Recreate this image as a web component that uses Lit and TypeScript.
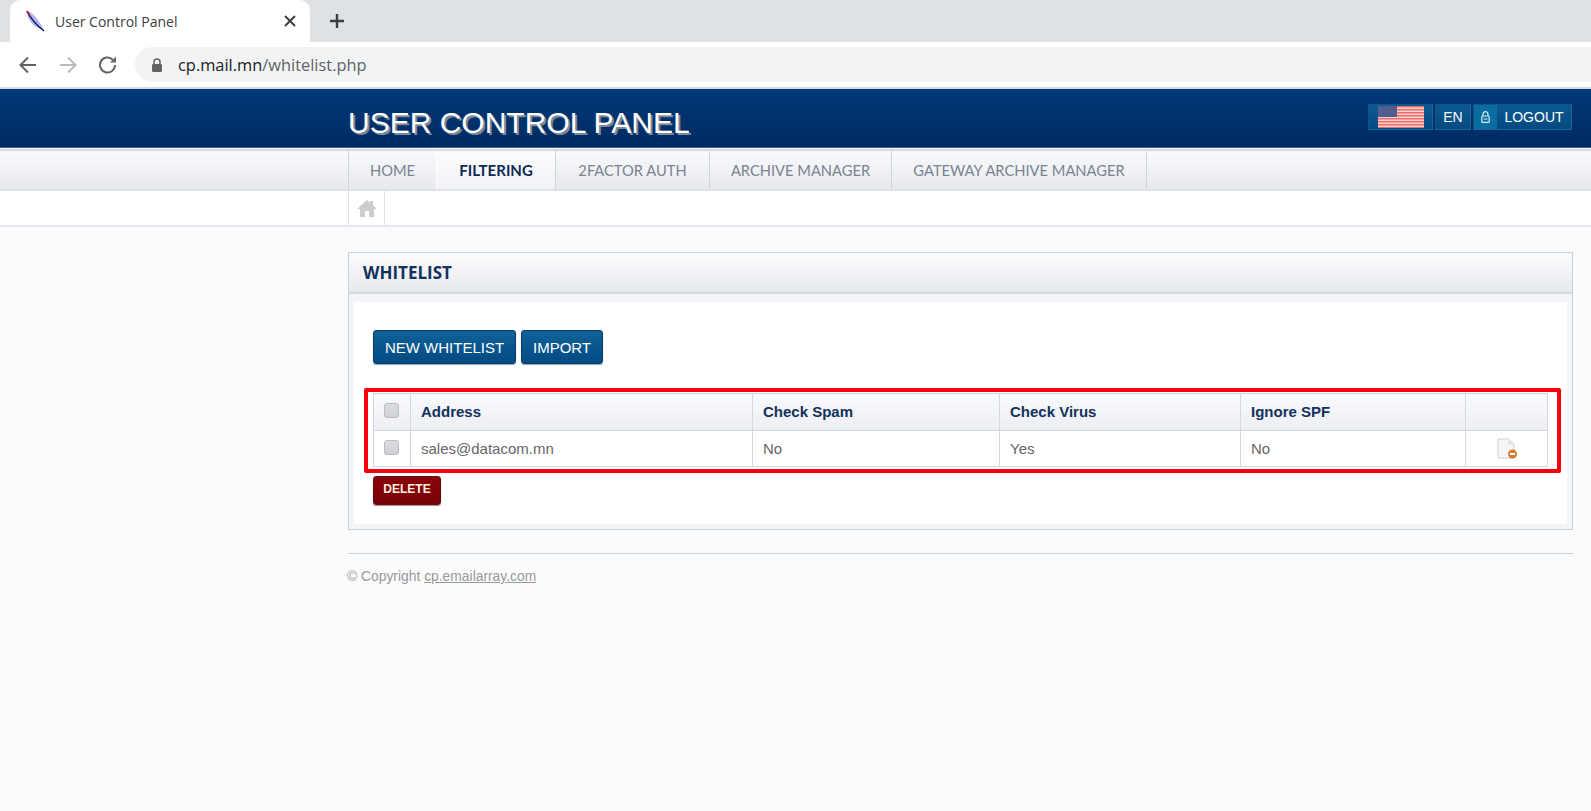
import { LitElement, html, css, svg } from "lit";
import { customElement } from "lit/decorators.js";

const tabs = [
  { label: "HOME", w: 88 },
  { label: "FILTERING", w: 119, active: true },
  { label: "2FACTOR AUTH", w: 154 },
  { label: "ARCHIVE MANAGER", w: 182 },
  { label: "GATEWAY ARCHIVE MANAGER", w: 256 },
];
const stripes = [0, 1, 2, 3, 4, 5, 6];

@customElement("app-root")
export class AppRoot extends LitElement {
  static styles = css`
    :host { display: block; min-height: 811px; background: #fafbfd; font-family: "Liberation Sans", Arial, sans-serif; color: #555; overflow: hidden; }
    .strip { height: 42px; background: #dee1e6; display: flex; align-items: flex-end; position: relative; }
    .tab { margin-left: 10px; width: 300px; height: 42px; background: #fff; border-radius: 10px 10px 0 0; display: flex; align-items: center; box-sizing: border-box; padding: 0 14px 0 14px; }
    .tab-title { font: 14px "Open Sans", sans-serif; color: #3c4043; margin-left: 9px; flex: 1; white-space: nowrap; }
    .plus { margin-left: 19px; align-self: center; display: flex; }
    .toolbar { height: 45px; background: #fff; display: flex; align-items: center; padding-left: 16px; box-sizing: border-box; }
    .nav-ic { width: 24px; height: 24px; margin-right: 16px; display: block; flex: none; }
    .nav-ic.last { margin-right: 15px; }
    .omni { flex: 1; height: 35px; border-radius: 18px 0 0 18px; background: #f1f3f4; display: flex; align-items: center; padding-left: 16px; font: 16.4px "Open Sans", sans-serif; color: #202124; }
    .omni svg { margin-right: 15px; }
    .omni span { color: #5f6368; }
    .sep { height: 2px; background: #d2dbe4; }
    .head { height: 59px; background: linear-gradient(#003a78, #002a62); border-bottom: 1px solid #3d5f8e; box-sizing: border-box; display: flex; padding: 0 19px 0 348px; justify-content: space-between; }
    .title { font-size: 30px; line-height: 30px; color: #fff; margin-top: 19px; text-shadow: 2px 2px 0 #7c8798; white-space: nowrap; }
    .tools { display: flex; gap: 2px; margin-top: 15px; height: 26px; }
    .tool { background: linear-gradient(#0c5a90, #054a82); border: 1px solid #1d6296; border-left-color: #0e5488; border-top-color: #0e5488; box-sizing: border-box; height: 26px; color: #fff; font-size: 14px; display: flex; align-items: center; }
    .flag { width: 65px; justify-content: center; }
    .flag svg { filter: blur(0.6px); }
    .en { width: 36px; justify-content: center; }
    .logout { width: 99px; padding: 0; }
    .lock { width: 23px; height: 24px; background: #0a6d9f; display: flex; align-items: center; justify-content: center; }
    .logout span { flex: 1; text-align: center; }
    .navbar { height: 42px; margin-top: 1px; border-top: 2px solid #d6d9de; border-bottom: 2px solid #dfe2e7; box-sizing: border-box; background: linear-gradient(#f9fafc, #e7e9ee); padding-left: 348px; display: flex; }
    .nt { box-sizing: border-box; border-left: 1px solid #ced4de; display: flex; align-items: center; justify-content: center; font: 14.7px "Lato", sans-serif; color: #7a8391; white-space: nowrap; }
    .nt:last-child { border-right: 1px solid #ced4de; }
    .nt.active { background: linear-gradient(#fbfcfd, #f0f2f5); font-weight: 700; font-size: 15px; color: #0d2b54; border-left-color: #fff; }
    .crumb { height: 36px; background: #fff; border-bottom: 2px solid #e4e6ea; box-sizing: border-box; padding-left: 348px; }
    .home { width: 37px; height: 100%; box-sizing: border-box; border-left: 1px solid #dfe2e7; border-right: 1px solid #dfe2e7; display: flex; align-items: center; justify-content: center; }
    .main { width: 1225px; margin: 25px 0 0 348px; }
    .panel { border: 1px solid #c8cfda; height: 278px; box-sizing: border-box; background: #f3f5f9; padding: 0 5px 5px; display: flex; flex-direction: column; }
    .ph { margin: 0 -5px; height: 41px; flex: none; box-sizing: border-box; background: linear-gradient(#fbfcfd, #e6e9ee); border-bottom: 2px solid #d5d9e0; font: 700 17px/39px "Open Sans", sans-serif; padding-left: 14px; color: #12315c; }
    .pb { margin-top: 8px; flex: 1; background: #fff; padding: 28px 0 0 19px; }
    .btns { display: flex; gap: 5px; }
    .btn { height: 34px; box-sizing: border-box; border: 1px solid #0d3c6a; border-radius: 3px; background: linear-gradient(#0f6299, #024a82); color: #fff; font-size: 15px; display: flex; align-items: center; justify-content: center; box-shadow: 0 1px 1px #8fa3b8; }
    .b1 { width: 143px; } .b2 { width: 82px; }
    .red { margin: 24px 0 0 -9px; width: 1197px; border: 4px solid #f8000d; border-radius: 2px; box-sizing: border-box; padding: 1px 9px 2px 5px; }
    table { border-collapse: collapse; width: 1174px; table-layout: fixed; border: 1px solid #ced4de; font-size: 15px; }
    th, td { border: 1px solid #d3d8e1; text-align: left; padding: 0 0 1px 10px; }
    th { height: 35px; background: linear-gradient(#f9fafc, #eceef3); color: #12315c; font-weight: 700; }
    td { height: 34px; color: #666; background: #fff; }
    .cb { padding: 0; text-align: center; }
    .box { display: block; margin: 0 0 3px 10px; width: 13px; height: 13px; border: 1px solid #b9bcc2; border-radius: 3px; background: linear-gradient(#dcdde0, #cfd1d5); }
    .ic { padding: 0; text-align: center; }
    .ic svg { display: block; margin: 0 0 0 31px; }
    .del { margin-top: 3px; width: 68px; height: 29px; box-sizing: border-box; border: 1px solid #5a1016; border-radius: 3px; background: linear-gradient(#8d0409, #760206); color: #ffeedd; font-weight: 700; font-size: 12px; display: flex; justify-content: center; padding-top: 5px; box-shadow: 0 1px 1px #a88; }
    hr { border: 0; height: 1px; background: #c8cfda; margin: 23px 0 0; }
    .foot { font-size: 13.85px; color: #999; margin: 14px 0 0 -1px; line-height: 16px; }
    .foot a { color: #999; text-decoration: underline; }
  `;

  render() {
    return html`
      <div class="strip">
        <div class="tab">
          <svg width="22" height="22" viewBox="0 0 22 22">
            <path d="M2 1 C7 1 14 8 20 20 C11 18 4 12 2 1Z" fill="#b4b4ee"/>
            <path d="M3 1 C6 7 12 15 20 21" stroke="#0c1050" stroke-width="1.3" fill="none"/>
            <path d="M3 1 L5.5 4.5" stroke="#d8202c" stroke-width="1.6"/>
          </svg>
          <span class="tab-title">User Control Panel</span>
          <svg width="12" height="12" viewBox="0 0 12 12"><path d="M1 1 L11 11 M11 1 L1 11" stroke="#3c4043" stroke-width="2"/></svg>
        </div>
        <div class="plus"><svg width="16" height="16" viewBox="0 0 16 16"><path d="M8 1 V15 M1 8 H15" stroke="#3c4043" stroke-width="2.4"/></svg></div>
      </div>
      <div class="toolbar">
        <svg class="nav-ic" viewBox="0 0 24 24"><path d="M20 12 H5 M12 4.5 L4.5 12 L12 19.5" fill="none" stroke="#5f6368" stroke-width="2"/></svg>
        <svg class="nav-ic" viewBox="0 0 24 24"><path d="M4 12 H19 M12 4.5 L19.5 12 L12 19.5" fill="none" stroke="#b9bbbe" stroke-width="2"/></svg>
        <svg class="nav-ic last" viewBox="0 0 24 24"><path d="M19 12 A7.5 7.5 0 1 1 16.8 6.7" fill="none" stroke="#5f6368" stroke-width="2"/><path d="M20 3.5 V9.5 H14 Z" fill="#5f6368"/></svg>
        <div class="omni">
          <svg width="12" height="14" viewBox="0 0 12 14"><path d="M3 6 V4 a3 3 0 0 1 6 0 V6" fill="none" stroke="#5f6368" stroke-width="1.5"/><rect x="1" y="6" width="10" height="8" rx="1.2" fill="#5f6368"/></svg>
          cp.mail.mn<span>/whitelist.php</span>
        </div>
      </div>
      <div class="sep"></div>
      <div class="head">
        <div class="title">USER CONTROL PANEL</div>
        <div class="tools">
          <div class="tool flag">
            <svg width="46" height="22" viewBox="0 0 46 22">
              <rect width="46" height="22" fill="#e86c6c"/>
              ${stripes.map((i) => svg`<rect y=${i * 3 + 1.5} width="46" height="1.5" fill="#fbd0c8"/>`)}
              <rect width="19" height="11" fill="#525f8e"/>
            </svg>
          </div>
          <div class="tool en">EN</div>
          <div class="tool logout">
            <div class="lock"><svg width="9" height="12" viewBox="0 0 9 12"><path d="M2 5 V3.2 a2.5 2.5 0 0 1 5 0 V5" fill="none" stroke="#d6eef8" stroke-width="1.2"/><rect x="0.8" y="5" width="7.4" height="6.4" rx="1" fill="none" stroke="#d6eef8" stroke-width="1.2"/><path d="M2.5 8 H6.5" stroke="#d6eef8"/></svg></div>
            <span>LOGOUT</span>
          </div>
        </div>
      </div>
      <div class="navbar">
        ${tabs.map((t) => html`<div class="nt ${t.active ? "active" : ""}" style="width:${t.w}px">${t.label}</div>`)}
      </div>
      <div class="crumb">
        <div class="home"><svg width="20" height="18" viewBox="0 0 20 18"><path d="M10 1 L13 3.7 V2 H16 V6.4 L20 10 H17 V18 H12 V12 H8 V18 H3 V10 H0 Z" fill="#cdcdcd"/></svg></div>
      </div>
      <div class="main">
        <div class="panel">
          <div class="ph">WHITELIST</div>
          <div class="pb">
            <div class="btns"><div class="btn b1">NEW WHITELIST</div><div class="btn b2">IMPORT</div></div>
            <div class="red">
              <table>
                <colgroup><col style="width:37px"/><col style="width:342px"/><col style="width:247px"/><col style="width:241px"/><col style="width:225px"/><col style="width:82px"/></colgroup>
                <tr>
                  <th class="cb"><span class="box"></span></th><th>Address</th><th>Check Spam</th><th>Check Virus</th><th>Ignore SPF</th><th></th>
                </tr>
                <tr>
                  <td class="cb"><span class="box"></span></td><td>sales@datacom.mn</td><td>No</td><td>Yes</td><td>No</td>
                  <td class="ic"><svg width="20" height="21" viewBox="0 0 20 21">
                    <path d="M1 1 H12 L17 6 V20 H1 Z" fill="#f6f6f8" stroke="#cfd2d8"/>
                    <path d="M12 1 V6 H17" fill="#e6e7ea" stroke="#d8dade"/>
                    <circle cx="15.5" cy="16" r="4.5" fill="#dd7a32"/><rect x="13" y="15" width="5" height="2" fill="#fff"/>
                  </svg></td>
                </tr>
              </table>
            </div>
            <div class="del">DELETE</div>
          </div>
        </div>
        <hr/>
        <div class="foot">© Copyright <a>cp.emailarray.com</a></div>
      </div>
    `;
  }
}
